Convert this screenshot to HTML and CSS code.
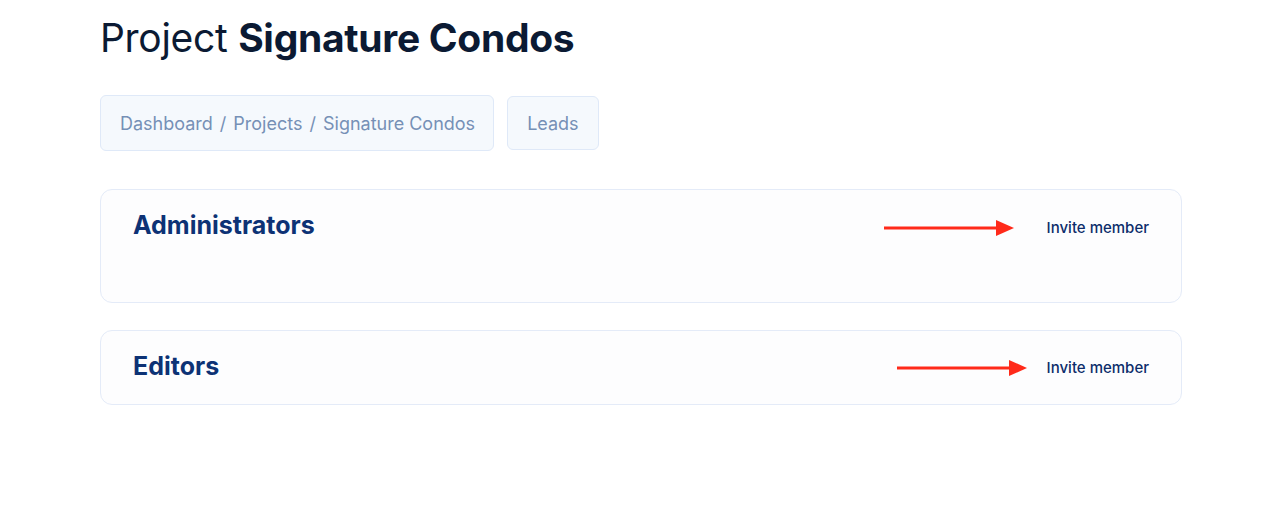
FILE: index.html
```html
<!DOCTYPE html>
<html>
<head>
<meta charset="utf-8">
<link rel="stylesheet" href="styles.css">
</head>
<body>
<main class="page">
  <h1 class="title">Project <strong>Signature Condos</strong></h1>
  <nav class="crumbs">
    <div class="crumb-box">Dashboard <span class="sep">/</span> Projects <span class="sep">/</span> Signature Condos</div>
    <div class="crumb-box leads">Leads</div>
  </nav>
  <section class="card card-admins">
    <div class="card-head">
      <h2 class="card-title">Administrators</h2>
      <a class="invite">Invite member</a>
    </div>
    <div class="card-body"></div>
    <svg class="arrow arrow-1" width="131" height="18" viewBox="0 0 131 18"><line x1="0" y1="9" x2="116" y2="9" stroke="#ff2a1a" stroke-width="3"/><polygon points="112,1 130,9 112,17" fill="#ff2a1a"/></svg>
  </section>
  <section class="card card-editors">
    <div class="card-head">
      <h2 class="card-title">Editors</h2>
      <a class="invite">Invite member</a>
    </div>
    <svg class="arrow arrow-2" width="131" height="18" viewBox="0 0 131 18"><line x1="0" y1="9" x2="116" y2="9" stroke="#ff2a1a" stroke-width="3"/><polygon points="112,1 130,9 112,17" fill="#ff2a1a"/></svg>
  </section>
</main>
</body>
</html>
```
FILE: styles.css
```css
* { box-sizing: border-box; }
html, body { margin: 0; padding: 0; background: #ffffff; }
body { font-family: Inter, "Noto Sans", sans-serif; }
.page {
  width: 1082px;
  margin-left: 100px;
  padding-top: 14px;
  display: flex;
  flex-direction: column;
}
.title {
  margin: 0;
  font-size: 39px;
  line-height: 48px;
  font-weight: 400;
  color: #0b1a33;
  letter-spacing: -0.3px;
}
.title strong { font-weight: 700; }
.crumbs {
  margin-top: 33px;
  display: flex;
  gap: 13px;
  align-items: center;
}
.crumb-box {
  height: 56px;
  padding: 0 18px 0 19px;
  display: flex;
  align-items: center;
  background: #f5f9fd;
  border: 1px solid #dfe9f8;
  border-radius: 6px;
  font-size: 18px;
  font-weight: 400;
  color: #7690b6;
}
.crumb-box .sep { margin: 0 7px; }
.crumb-box.leads { height: 54px; padding: 0 19px; }
.card {
  position: relative;
  margin-top: 38px;
  background: #fdfdfe;
  border: 1px solid #e4ebf8;
  border-radius: 12px;
  padding: 20px 32px 20px 32px;
}
.card-editors { margin-top: 27px; padding-bottom: 21px; }
.card-head {
  display: flex;
  justify-content: space-between;
  align-items: center;
  height: 32px;
}
.card-title {
  margin: -2px 0 0 0;
  font-size: 25px;
  line-height: 32px;
  font-weight: 700;
  color: #0d3275;
}
.card-editors .card-title { margin-top: -3px; }
.invite {
  font-size: 15px;
  font-weight: 500;
  color: #0d2d6b;
  margin-top: 2px;
}
.card-editors .invite { margin-top: 0; }
.card-body { height: 40px; }
.arrow { position: absolute; }
.arrow-1 { left: 783px; top: 29px; }
.arrow-2 { left: 796px; top: 28px; }
```
